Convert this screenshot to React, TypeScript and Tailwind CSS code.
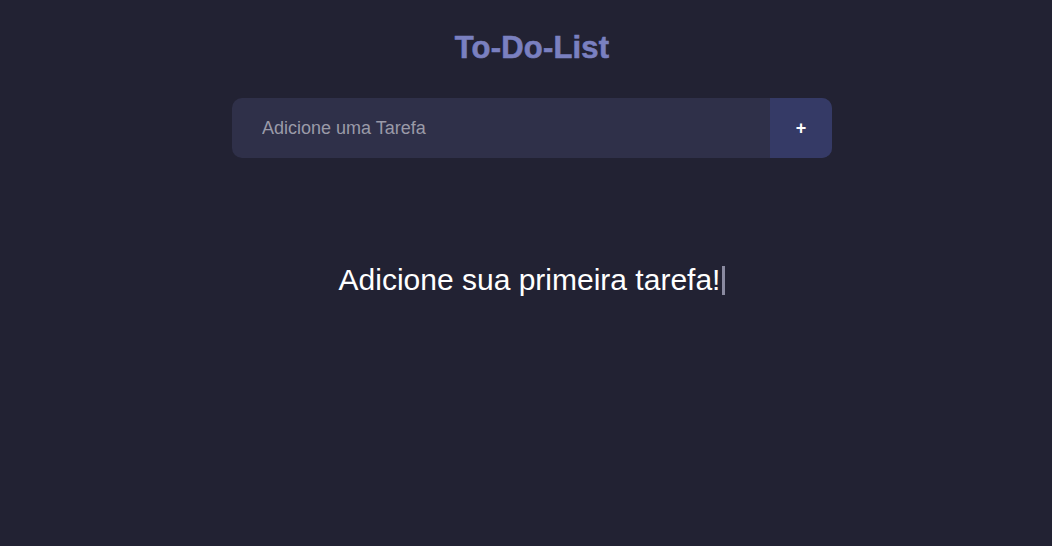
export default function App() {
  return (
    <div
      className="min-h-[546px] w-full bg-[#222233] pl-3"
      style={{ fontFamily: '"Liberation Sans", Arial, sans-serif' }}
    >
      <div className="flex flex-col items-center pt-[30px]">
        <h1 className="text-[31px] font-bold leading-[36px] tracking-[0.2px] text-[#7a80c0] [-webkit-text-stroke:0.6px_#7a80c0]">To-Do-List</h1>
        <div className="mt-[32px] flex h-[60px] w-[600px] overflow-hidden rounded-[10px] bg-[#2f3049]">
          <input
            className="flex-1 bg-transparent pl-[30px] text-[18px] text-white outline-none placeholder:text-[#9a9aa8]"
            placeholder="Adicione uma Tarefa"
          />
          <button className="w-[62px] bg-[#353a66] text-[18px] font-bold text-white">+</button>
        </div>
        <div className="mt-[104px] flex items-center">
          <span className="text-[30px] leading-[36px] text-white">Adicione sua primeira tarefa!</span>
          <span className="ml-[2px] inline-block h-[29px] w-[3px] bg-[#8a8aa0]" />
        </div>
      </div>
    </div>
  );
}
